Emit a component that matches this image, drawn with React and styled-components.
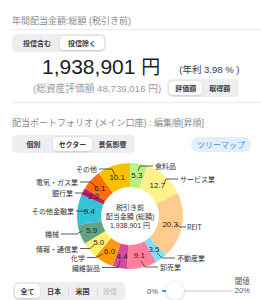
import React from "react"
import styled, { createGlobalStyle } from "styled-components"

const GlobalStyle = createGlobalStyle`
    html, body {
        margin: 0;
        padding: 0;
        background: #ffffff;
    }
    body {
        font-family: "Liberation Sans", "Noto Sans CJK JP", sans-serif;
        color: #222;
        overflow: hidden;
    }
`

const sectors = [
    { name: '食料品', value: 5.3, color: '#b9f27f' },
    { name: 'サービス業', value: 12.7, color: '#fff18c' },
    { name: 'REIT', value: 20.3, color: '#ffcc8f' },
    { name: '不動産業', value: 3.5, color: '#80def7' },
    { name: '卸売業', value: 9.1, color: '#ff7f9e' },
    { name: '繊維製品', value: 4.4, color: '#d84a9c' },
    { name: '化学', value: 6.0, color: '#ff9a0a' },
    { name: '情報・通信業', value: 5.0, color: '#fff36e' },
    { name: '機械', value: 5.9, color: '#62a283' },
    { name: 'その他金融業', value: 9.4, color: '#33c4d9' },
    { name: '銀行業', value: 2.2, color: '#c41e66' },
    { name: '電気・ガス業', value: 6.1, color: '#ff6c0a' },
    { name: 'その他', value: 10.1, color: '#f6c200' },
]

// label text + leader line, in page coordinates
const labels = [
    { text: '食料品', x: 155, y: 167, anchor: 'start', line: '153,167 140,167 138,172' },
    { text: 'サービス業', x: 180, y: 180, anchor: 'start', line: '178,180 166,180 164,185' },
    { text: 'REIT', x: 187, y: 228, anchor: 'start', line: '176,225 180,228 186,228' },
    { text: '不動産業', x: 177, y: 259, anchor: 'start', line: '157,254 162,259 175,259' },
    { text: '卸売業', x: 160, y: 268, anchor: 'start', line: '141,262 145,268 158,268' },
    { text: '繊維製品', x: 100, y: 268.5, anchor: 'end', line: '102,268.5 118,268.5 120,262' },
    { text: '化学', x: 85, y: 258.5, anchor: 'end', line: '87,258.5 96,258.5 103,255' },
    { text: '情報・通信業', x: 78, y: 249.5, anchor: 'end', line: '80,249.5 90,249.5 94,246' },
    { text: '機械', x: 59, y: 235, anchor: 'end', line: '61,235 77,235 82,232' },
    { text: 'その他金融業', x: 74, y: 212, anchor: 'end', line: '76,212 85,212' },
    { text: '銀行業', x: 73, y: 194, anchor: 'end', line: '75,194 86,194 90,198' },
    { text: '電気・ガス業', x: 78, y: 183, anchor: 'end', line: '80,183 91,183 96,188' },
    { text: 'その他', x: 97, y: 170, anchor: 'end', line: '99,170 112,170 115,176' },
]

const CX = 130
const CY = 217
const R_OUT = 53
const R_IN = 29

const point = (frac, r) => {
    const a = frac * Math.PI * 2
    return [CX + r * Math.sin(a), CY - r * Math.cos(a)]
}

const arcPath = (from, to) => {
    const large = to - from > 0.5 ? 1 : 0
    const [x1, y1] = point(from, R_OUT)
    const [x2, y2] = point(to, R_OUT)
    const [x3, y3] = point(to, R_IN)
    const [x4, y4] = point(from, R_IN)
    return `M${x1} ${y1} A${R_OUT} ${R_OUT} 0 ${large} 1 ${x2} ${y2} L${x3} ${y3} A${R_IN} ${R_IN} 0 ${large} 0 ${x4} ${y4} Z`
}

const Donut = () => {
    let acc = 0
    const slices = sectors.map(s => {
        const from = acc / 100
        acc += s.value
        const to = acc / 100
        return { ...s, from, to, mid: (from + to) / 2 }
    })
    return (
        <Chart viewBox="0 155 261 124" width="261" height="124">
            {slices.map(s => (
                <path key={s.name} d={arcPath(s.from, s.to)} fill={s.color} />
            ))}
            {labels.map(l => (
                <g key={l.text}>
                    <polyline points={l.line} fill="none" stroke="#333" strokeWidth="0.8" />
                    <CategoryText x={l.x} y={l.y} textAnchor={l.anchor} dominantBaseline="central">{l.text}</CategoryText>
                </g>
            ))}
            {slices.map(s => {
                const [x, y] = point(s.mid, 41)
                return (
                    <ValueText key={s.name + 'v'} x={x} y={y} textAnchor="middle" dominantBaseline="central">
                        {s.value.toFixed(1)}
                    </ValueText>
                )
            })}
            <CenterText x={CX} y={208} textAnchor="middle" dominantBaseline="central">税引き前</CenterText>
            <CenterText x={CX} y={217} textAnchor="middle" dominantBaseline="central">配当金額 (総額)</CenterText>
            <CenterText x={CX} y={226} textAnchor="middle" dominantBaseline="central">1,938,901 円</CenterText>
        </Chart>
    )
}

const Segmented = ({ items, active, widths, muted = [] }) => (
    <Seg>
        {items.map((it, i) => (
            <SegItem
                key={it}
                $active={i === active}
                $w={widths[i]}
                $muted={muted.includes(i)}
                $divider={i > 0 && i !== active && i - 1 !== active}
            >
                {it}
            </SegItem>
        ))}
    </Seg>
)

const App = () => {
    return (
        <>
            <GlobalStyle />
            <Page>
                <SectionTitle>年間配当金額:総額 (税引き前)</SectionTitle>
                <Divider $top={1} />
                <SegWrap $top={4}>
                    <Segmented items={['投信含む', '投信除く']} active={1} widths={[46, 44]} />
                </SegWrap>
                <AmountRow>
                    <BigAmount>1,938,901 <Yen>円</Yen></BigAmount>
                    <Yield>(年利 3.98 % )</Yield>
                </AmountRow>
                <SubRow>
                    <TotalAssets>(総資産評価額 48,739,016 円)</TotalAssets>
                    <Segmented items={['評価額', '取得額']} active={0} widths={[33, 35]} />
                </SubRow>
                <Divider $top={5} />
                <SectionTitle $top={15}>配当ポートフォリオ (メイン口座) : 編集順[昇順]</SectionTitle>
                <ControlRow>
                    <Segmented items={['個別', 'セクター', '景気影響']} active={1} widths={[39, 39, 41]} />
                    <TreemapButton>ツリーマップ</TreemapButton>
                </ControlRow>
                <Donut />
                <BottomRow>
                    <Segmented items={['全て', '日本', '米国', '投信']} active={0} widths={[25, 28, 29, 26]} muted={[3]} />
                    <SliderGroup>
                        <SliderLabel>0%</SliderLabel>
                        <Track>
                            <TrackFill />
                            <Thumb />
                        </Track>
                        <Threshold>
                            <span>閾値</span>
                            <span>20%</span>
                        </Threshold>
                    </SliderGroup>
                </BottomRow>
            </Page>
        </>
    )
}

const Page = styled.div`
    width: 261px;
    height: 300px;
    box-sizing: border-box;
    padding: 15px 10px 0 12px;
    display: flex;
    flex-direction: column;
    overflow: hidden;
`

const SectionTitle = styled.div`
    margin-top: ${p => p.$top || 0}px;
    font-size: 9px;
    line-height: 13px;
    color: #8a8a8e;
    white-space: nowrap;
`

const Divider = styled.div`
    margin-top: ${p => p.$top || 0}px;
    height: 1px;
    background: #ececee;
    margin-right: -10px;
`

const SegWrap = styled.div`
    margin-top: ${p => p.$top || 0}px;
    display: flex;
`

const Seg = styled.div`
    display: inline-flex;
    align-items: stretch;
    height: 18px;
    box-sizing: border-box;
    padding: 2px;
    border-radius: 5px;
    background: #eeeef0;
`

const SegItem = styled.div`
    position: relative;
    width: ${p => p.$w}px;
    display: flex;
    align-items: center;
    justify-content: center;
    font-size: 7px;
    font-weight: 700;
    color: ${p => (p.$muted ? '#c9c9cc' : '#3a3a3c')};
    background: ${p => (p.$active ? '#ffffff' : 'transparent')};
    border-radius: 4px;
    box-shadow: ${p => (p.$active ? '0 0.5px 2px rgba(0,0,0,0.15)' : 'none')};
    white-space: nowrap;

    &::before {
        content: '';
        display: ${p => (p.$divider ? 'block' : 'none')};
        position: absolute;
        left: 0;
        top: 3px;
        bottom: 3px;
        width: 1px;
        background: #d8d8dc;
    }
`

const AmountRow = styled.div`
    margin-top: 2px;
    height: 25px;
    display: flex;
    align-items: center;
    padding-left: 30px;
    gap: 19px;
`

const BigAmount = styled.div`
    font-size: 21px;
    line-height: 25px;
    color: #1c1c1e;
    white-space: nowrap;
`

const Yen = styled.span`
    font-family: "Noto Sans CJK JP", sans-serif;
    font-size: 19px;
`

const Yield = styled.div`
    margin-top: 5px;
    font-size: 9.5px;
    color: #3a3a3c;
    white-space: nowrap;
`

const SubRow = styled.div`
    height: 18px;
    display: flex;
    align-items: center;
    padding-left: 21px;
    gap: 6px;
`

const TotalAssets = styled.div`
    font-size: 9.7px;
    color: #9a9a9e;
    white-space: nowrap;
`

const ControlRow = styled.div`
    margin-top: 5px;
    display: flex;
    align-items: center;
    justify-content: space-between;
`

const TreemapButton = styled.div`
    height: 15px;
    padding: 0 6px;
    display: flex;
    align-items: center;
    border-radius: 8px;
    background: #e2effd;
    color: #3d8fe6;
    font-size: 8px;
    white-space: nowrap;
`

const Chart = styled.svg`
    display: block;
    flex-shrink: 0;
    margin: 1px -10px 0 -12px;
`

const CategoryText = styled.text`
    font-family: "Noto Sans CJK JP", sans-serif;
    font-size: 7px;
    fill: #333;
`

const ValueText = styled.text`
    font-family: "Liberation Sans", sans-serif;
    font-size: 8px;
    fill: #222;
`

const CenterText = styled.text`
    font-family: "Liberation Sans", "Noto Sans CJK JP", sans-serif;
    font-size: 7px;
    fill: #333;
`

const BottomRow = styled.div`
    margin-top: 4px;
    height: 18px;
    display: flex;
    align-items: center;
    padding-left: 1px;
`

const SliderGroup = styled.div`
    margin-left: 22px;
    height: 18px;
    display: flex;
    align-items: center;
`

const SliderLabel = styled.div`
    font-size: 7.5px;
    color: #555;
`

const Track = styled.div`
    position: relative;
    margin-left: 4px;
    width: 71px;
    height: 2px;
    border-radius: 1px;
    background: #e2e2e4;
`

const TrackFill = styled.div`
    width: 7px;
    height: 2px;
    border-radius: 1px;
    background: #3d8fe6;
`

const Thumb = styled.div`
    position: absolute;
    left: 4px;
    top: -8px;
    width: 18px;
    height: 18px;
    border-radius: 50%;
    background: #ffffff;
    box-shadow: 0 0.5px 3px rgba(0, 0, 0, 0.22);
`

const Threshold = styled.div`
    align-self: flex-end;
    margin-bottom: 5px;
    margin-left: 2px;
    display: flex;
    flex-direction: column;
    align-items: flex-end;
    font-size: 7.5px;
    line-height: 9px;
    color: #555;
`

export default App
